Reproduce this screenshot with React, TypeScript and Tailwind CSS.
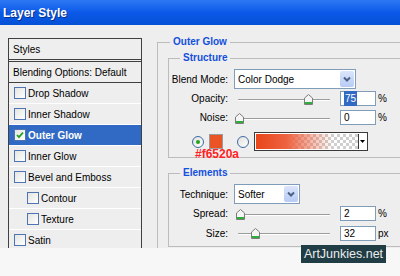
import React from 'react';

const styleRows = [
  { label: 'Drop Shadow' },
  { label: 'Inner Shadow' },
  { label: 'Outer Glow', checked: true, selected: true },
  { label: 'Inner Glow' },
  { label: 'Bevel and Emboss' },
  { label: 'Contour', indent: true },
  { label: 'Texture', indent: true },
  { label: 'Satin' },
];

function Checkbox({ checked }: { checked?: boolean }) {
  return (
    <span className="flex h-[12px] w-[12px] shrink-0 items-center justify-center border border-[#4f74b3] bg-gradient-to-br from-[#e4e4e0] to-white">
      {checked && (
        <svg width="8" height="8" viewBox="0 0 8 8">
          <path d="M1 4 L3 6.2 L7 1.5" fill="none" stroke="#21a121" strokeWidth="1.8" />
        </svg>
      )}
    </span>
  );
}

function Radio({ checked }: { checked?: boolean }) {
  return (
    <span className="flex h-[12px] w-[12px] shrink-0 items-center justify-center rounded-full border border-[#3f6aa6] bg-gradient-to-br from-[#e0e0dc] to-white">
      {checked && <span className="h-[4px] w-[4px] rounded-full bg-[#1fa51f]" />}
    </span>
  );
}

function Chevron() {
  return (
    <svg width="10" height="8" viewBox="0 0 10 8">
      <path d="M2 2.5 L5 5.5 L8 2.5" fill="none" stroke="#4d6185" strokeWidth="2" />
    </svg>
  );
}

function Select({ value, width }: { value: string; width: string }) {
  return (
    <div className={`ml-[6px] flex h-[20px] ${width} items-center border border-[#7f9db9] bg-white`}>
      <span className="flex-1 pl-[3px] text-[10px]">{value}</span>
      <span className="mr-[1px] flex h-[16px] w-[14px] items-center justify-center rounded-[2px] bg-gradient-to-b from-[#dbe5fb] to-[#b7cbf5]">
        <Chevron />
      </span>
    </div>
  );
}

function Thumb({ left }: { left: number }) {
  return (
    <svg className="absolute top-[5px]" style={{ left }} width="9" height="11" viewBox="0 0 9 11">
      <path d="M0.5 4 L4.5 0.5 L8.5 4 V10.5 H0.5 Z" fill="#f4f4f4" stroke="#7c7c7c" />
      <rect x="1" y="8" width="7" height="2" fill="#2eae3a" />
    </svg>
  );
}

function SliderRow({
  label,
  thumb,
  value,
  unit,
  selected,
  tall,
}: {
  label: string;
  thumb: number;
  value: string;
  unit: string;
  selected?: boolean;
  tall?: boolean;
}) {
  return (
    <div className={`flex ${tall ? 'h-[20px]' : 'h-[19px]'} items-center`}>
      <span className="w-[59px] text-right">{label}</span>
      <div className="relative ml-[6px] h-full w-[100px]">
        <div className="mx-[4px] mt-[10px] h-[2px] border-t border-b border-t-[#9c9c9c] border-b-white" />
        <Thumb left={thumb - 4} />
      </div>
      <div className="ml-[6px] flex h-[15px] w-[36px] items-center border border-[#7f9db9] bg-white pl-[3px]">
        {selected ? <span className="bg-[#316ac5] px-[1px] text-white">{value}</span> : value}
      </div>
      <span className="ml-[2px]">{unit}</span>
    </div>
  );
}

export default function App() {
  return (
    <div className="relative h-[276px] w-[400px] overflow-hidden bg-[#f7f7f7] font-['Liberation_Sans',Arial,sans-serif] text-[10px] text-black">
      {/* title bar */}
      <div className="flex h-[25px] items-center bg-gradient-to-b from-[#2d78f3] via-[#0a59e8] to-[#0550d6] pl-[3px] text-[12px] font-bold text-white [text-shadow:1px_1px_0_#0a2f8a]">
        Layer Style
      </div>

      <div className="flex h-[223px] overflow-hidden bg-[#eeeeee]">
        {/* styles list */}
        <div className="ml-[8px] mt-[13px] w-[134px] shrink-0 border-x border-t border-[#404040]">
          <div className="flex h-[23px] items-center border-b-[3px] border-double border-[#404040] pl-[4px]">Styles</div>
          <div className="flex h-[21px] items-center border-b border-[#404040] pl-[4px]">Blending Options: Default</div>
          {styleRows.map((r) => (
            <div
              key={r.label}
              className={`flex h-[21px] items-center gap-[2px] border-b border-white ${r.indent ? 'pl-[18px]' : 'pl-[5px]'} ${
                r.selected ? 'bg-[#316ac5] font-bold text-white' : ''
              }`}
            >
              <Checkbox checked={r.checked} />
              <span>{r.label}</span>
            </div>
          ))}
        </div>

        {/* outer glow panel */}
        <fieldset className="ml-[15px] mt-[10px] w-[260px] shrink-0 border-l border-t border-[#bcbcbc]">
          <legend className="ml-[12px] px-[3px] text-[10px] leading-[14px] font-bold text-[#1450dc]">Outer Glow</legend>

          <fieldset className="ml-[10px] mt-[2px] w-[240px] border-b border-l border-t border-[#bcbcbc] pb-[6px] pt-[4px]">
            <legend className="ml-[11px] px-[3px] leading-[14px] font-bold text-[#1450dc]">Structure</legend>
            <div className="flex h-[20px] items-center">
              <span className="w-[59px] text-right">Blend Mode:</span>
              <Select value="Color Dodge" width="w-[122px]" />
            </div>
            <SliderRow label="Opacity:" thumb={74} value="75" unit="%" selected />
            <SliderRow label="Noise:" thumb={5} value="0" unit="%" />
            <div className="relative mt-[5px] flex h-[19px] items-center pl-[23px]">
              <Radio checked />
              <span className="ml-[5px] h-[15px] w-[14px] border border-[#9a9a9a] bg-[#ea5324]" />
              <span className="ml-[14px]">
                <Radio />
              </span>
              <div className="ml-[5px] flex h-[19px] w-[114px] border border-[#3a3a3a] bg-white p-[1px]">
                <div className="flex-1 bg-[linear-gradient(to_right,#e8461a_0%,#ee6240_30%,rgba(240,110,80,0)_75%),conic-gradient(#cfcfcf_25%,#ffffff_0_50%,#cfcfcf_0_75%,#ffffff_0)] bg-[length:100%_100%,6px_6px]" />
                <div className="flex w-[8px] items-center justify-center border-l border-[#3a3a3a] bg-white">
                  <svg width="5" height="3" viewBox="0 0 5 3">
                    <path d="M0 0 H5 L2.5 3 Z" fill="#000" />
                  </svg>
                </div>
              </div>
              <span className="absolute left-[26px] top-[15px] text-[12px] leading-[14px] font-bold text-[#ff2020] [text-shadow:0_0_1px_#ffffff]">
                #f6520a
              </span>
            </div>
          </fieldset>

          <fieldset className="ml-[10px] mt-[8px] w-[240px] border-b border-l border-t border-[#bcbcbc] pb-[3px] pt-[4px]">
            <legend className="ml-[11px] px-[3px] leading-[14px] font-bold text-[#1450dc]">Elements</legend>
            <div className="flex h-[20px] items-center">
              <span className="w-[59px] text-right">Technique:</span>
              <Select value="Softer" width="w-[66px]" />
            </div>
            <SliderRow label="Spread:" thumb={6} value="2" unit="%" />
            <SliderRow label="Size:" thumb={21} value="32" unit="px" tall />
          </fieldset>
        </fieldset>
      </div>

      {/* watermark */}
      <div className="absolute left-[301px] top-[245px] flex h-[18px] w-[85px] items-center justify-center bg-[#203c45] text-[12.5px] text-[#ececec]">
        ArtJunkies.net
      </div>
    </div>
  );
}
